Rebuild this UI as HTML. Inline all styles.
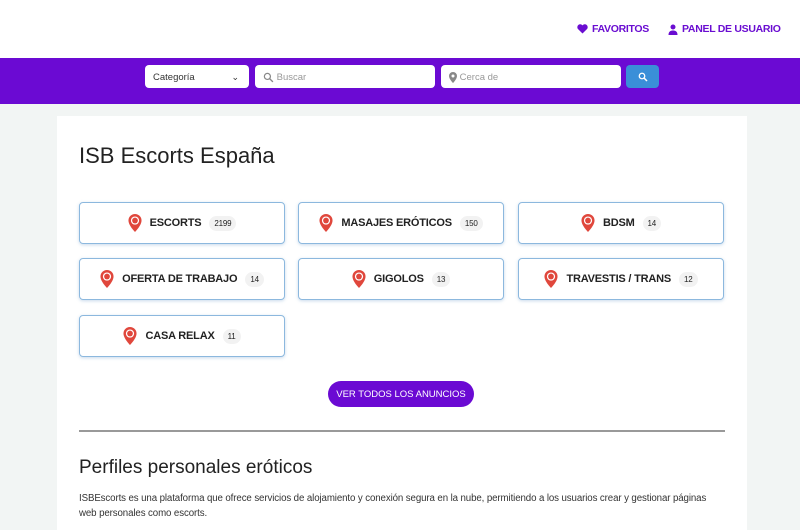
<!DOCTYPE html>
<html><head><meta charset="utf-8"><style>
*{box-sizing:border-box;margin:0;padding:0}
body{width:800px;height:530px;overflow:hidden;background:#f2f5f4;font-family:"Liberation Sans",sans-serif;color:#222;position:relative}
.top{position:absolute;left:0;top:0;width:800px;height:58px;background:#fff}
.nav{position:absolute;top:23px;font-size:10.5px;letter-spacing:-0.3px;font-weight:bold;color:#6a0dd1;display:flex;align-items:center;gap:4px}
.bar{position:absolute;top:58px;left:0;width:800px;height:46px;background:#6b0ad3}
.in{position:absolute;top:65px;height:23px;background:#fff;border-radius:4px;font-size:9.5px;color:#999;display:flex;align-items:center;padding-left:8px;padding-top:1px}
.main{position:absolute;left:57px;top:116px;width:690px;height:414px;background:#fff}
h1{position:absolute;left:22px;top:27px;font-size:22px;font-weight:normal;color:#222}
.card{position:absolute;width:206px;height:42px;border:1px solid #8cb8de;border-radius:4px;box-shadow:0 1px 3px rgba(100,150,200,.35);display:flex;align-items:center;justify-content:center;gap:8px;font-size:11px;letter-spacing:-0.2px;font-weight:bold;color:#222}
.b{font-size:8px;font-weight:normal;background:#f2f2f2;border-radius:8px;padding:3px 5px}
.btn{position:absolute;left:271px;top:265px;width:146px;height:26px;border-radius:13px;background:#6b0ad3;color:#fff;font-size:9.5px;display:flex;align-items:center;justify-content:center}
.hr{position:absolute;left:22px;top:314px;width:646px;height:2px;background:#999}
h2{position:absolute;left:22px;top:341px;font-size:19px;font-weight:normal}
p{position:absolute;left:22px;top:375px;width:644px;font-size:9.7px;letter-spacing:-0.1px;line-height:15px;color:#333}
</style></head><body>
<div class="top"></div>
<div class="nav" style="left:577px"><svg width="11" height="10" viewBox="0 0 24 22"><path d="M12 21L2 11A5.5 5.5 0 0 1 12 3a5.5 5.5 0 0 1 10 8z" fill="#6a0dd1"/></svg>FAVORITOS</div>
<div class="nav" style="left:668px"><svg width="10" height="11" viewBox="0 0 20 22"><circle cx="10" cy="6" r="5" fill="#6a0dd1"/><path d="M1 22c0-7 4-9 9-9s9 2 9 9z" fill="#6a0dd1"/></svg>PANEL DE USUARIO</div>
<div class="bar"></div>
<div class="in" style="left:145px;width:104px;color:#333">Categoría<span style="position:absolute;right:10px;font-size:9px">⌄</span></div>
<div class="in" style="left:255px;width:180px"><svg width="11" height="11" viewBox="0 0 20 20"><circle cx="8" cy="8" r="5.5" stroke="#888" stroke-width="2.2" fill="none"/><path d="M12 12l6 6" stroke="#888" stroke-width="2.4"/></svg>&nbsp;Buscar</div>
<div class="in" style="left:441px;width:180px"><svg width="8" height="11" viewBox="0 0 16 22"><path d="M8 0a8 8 0 0 0-8 8c0 6 8 14 8 14s8-8 8-14a8 8 0 0 0-8-8zm0 5a3 3 0 1 1 0 6a3 3 0 0 1 0-6z" fill="#888"/></svg>&nbsp;Cerca de</div>
<div class="in" style="left:626px;width:33px;background:#3a8fd8;padding:0;justify-content:center"><svg width="10" height="10" viewBox="0 0 20 20"><circle cx="8" cy="8" r="5.5" stroke="#fff" stroke-width="2.6" fill="none"/><path d="M12 12l6 6" stroke="#fff" stroke-width="3"/></svg></div>
<div class="main">
<h1>ISB Escorts España</h1>
<div class="card" style="left:22px;top:86px"><svg width="14" height="18" viewBox="0 0 16 22"><path d="M8 0a8 8 0 0 0-8 8c0 6 8 14 8 14s8-8 8-14a8 8 0 0 0-8-8z" fill="#e0473c"/><circle cx="8" cy="8" r="5" fill="#fff"/><circle cx="8" cy="8" r="3.5" fill="#e0473c"/></svg>ESCORTS <span class="b">2199</span></div>
<div class="card" style="left:241px;top:86px"><svg width="14" height="18" viewBox="0 0 16 22"><path d="M8 0a8 8 0 0 0-8 8c0 6 8 14 8 14s8-8 8-14a8 8 0 0 0-8-8z" fill="#e0473c"/><circle cx="8" cy="8" r="5" fill="#fff"/><circle cx="8" cy="8" r="3.5" fill="#e0473c"/></svg>MASAJES ERÓTICOS <span class="b">150</span></div>
<div class="card" style="left:461px;top:86px"><svg width="14" height="18" viewBox="0 0 16 22"><path d="M8 0a8 8 0 0 0-8 8c0 6 8 14 8 14s8-8 8-14a8 8 0 0 0-8-8z" fill="#e0473c"/><circle cx="8" cy="8" r="5" fill="#fff"/><circle cx="8" cy="8" r="3.5" fill="#e0473c"/></svg>BDSM <span class="b">14</span></div>
<div class="card" style="left:22px;top:142px"><svg width="14" height="18" viewBox="0 0 16 22"><path d="M8 0a8 8 0 0 0-8 8c0 6 8 14 8 14s8-8 8-14a8 8 0 0 0-8-8z" fill="#e0473c"/><circle cx="8" cy="8" r="5" fill="#fff"/><circle cx="8" cy="8" r="3.5" fill="#e0473c"/></svg>OFERTA DE TRABAJO <span class="b">14</span></div>
<div class="card" style="left:241px;top:142px"><svg width="14" height="18" viewBox="0 0 16 22"><path d="M8 0a8 8 0 0 0-8 8c0 6 8 14 8 14s8-8 8-14a8 8 0 0 0-8-8z" fill="#e0473c"/><circle cx="8" cy="8" r="5" fill="#fff"/><circle cx="8" cy="8" r="3.5" fill="#e0473c"/></svg>GIGOLOS <span class="b">13</span></div>
<div class="card" style="left:461px;top:142px"><svg width="14" height="18" viewBox="0 0 16 22"><path d="M8 0a8 8 0 0 0-8 8c0 6 8 14 8 14s8-8 8-14a8 8 0 0 0-8-8z" fill="#e0473c"/><circle cx="8" cy="8" r="5" fill="#fff"/><circle cx="8" cy="8" r="3.5" fill="#e0473c"/></svg>TRAVESTIS / TRANS <span class="b">12</span></div>
<div class="card" style="left:22px;top:199px"><svg width="14" height="18" viewBox="0 0 16 22"><path d="M8 0a8 8 0 0 0-8 8c0 6 8 14 8 14s8-8 8-14a8 8 0 0 0-8-8z" fill="#e0473c"/><circle cx="8" cy="8" r="5" fill="#fff"/><circle cx="8" cy="8" r="3.5" fill="#e0473c"/></svg>CASA RELAX <span class="b">11</span></div>
<div class="btn">VER TODOS LOS ANUNCIOS</div>
<div class="hr"></div>
<h2>Perfiles personales eróticos</h2>
<p>ISBEscorts es una plataforma que ofrece servicios de alojamiento y conexión segura en la nube, permitiendo a los usuarios crear y gestionar páginas web personales como escorts.</p>
</div>
</body></html>
